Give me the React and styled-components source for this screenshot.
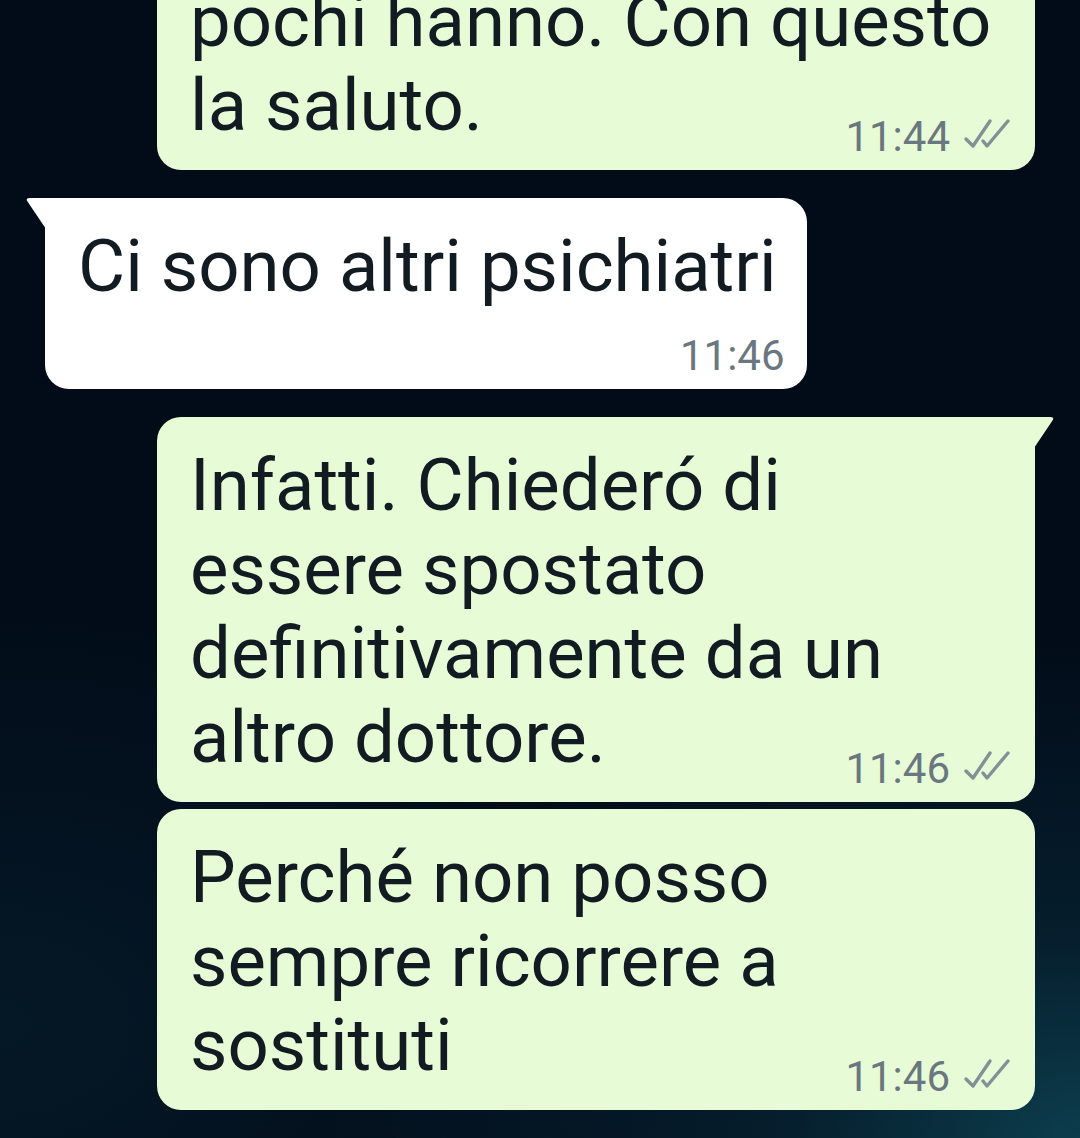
import React from "react";
import styled, { createGlobalStyle, css } from "styled-components";

const Global = createGlobalStyle`
  html, body {
    margin: 0;
    padding: 0;
    height: 1138px;
    overflow: hidden;
    background: #020b18;
  }
  #root { height: 1138px; }
`;

const Screen = styled.div`
  width: 1080px;
  height: 1138px;
  overflow: hidden;
  background:
    radial-gradient(ellipse 70% 45% at 100% 100%, rgba(14, 70, 86, 0.85) 0%, rgba(8, 42, 58, 0.6) 40%, rgba(2, 11, 24, 0) 100%),
    radial-gradient(ellipse 60% 40% at 0% 90%, rgba(6, 30, 44, 0.7) 0%, rgba(2, 11, 24, 0) 100%),
    #020b18;
  font-family: Roboto, "Noto Sans", "Liberation Sans", sans-serif;
`;

const List = styled.div`
  display: flex;
  flex-direction: column;
  padding: 0 45px;
  margin-top: -47px;
`;

const Row = styled.div`
  display: flex;
  justify-content: ${(p) => (p.$out ? "flex-end" : "flex-start")};
  margin-top: ${(p) => (p.$first ? "0" : p.$grouped ? "7px" : "28px")};
`;

const Bubble = styled.div`
  position: relative;
  display: flex;
  flex-direction: column;
  box-sizing: border-box;
  padding: 27px 30px 8px 33px;
  border-radius: 24px;
  background: ${(p) => (p.$out ? "#e7fcd6" : "#ffffff")};
  ${(p) => (p.$out ? css`width: 878px;` : css`max-width: 878px;`)}
  ${(p) =>
    p.$tail &&
    (p.$out
      ? css`border-top-right-radius: 0;`
      : css`border-top-left-radius: 0;`)}
`;

const Tail = styled.svg`
  position: absolute;
  top: 0;
  width: 21px;
  height: 31px;
  ${(p) => (p.$out ? css`right: -20px;` : css`left: -20px;`)}
`;

const Text = styled.div`
  font-size: 72.5px;
  line-height: 84px;
  color: #111b21;
  white-space: pre-line;
`;

const Meta = styled.div`
  display: flex;
  align-items: flex-start;
  justify-content: flex-end;
  gap: 12px;
  height: 50px;
  margin-top: ${(p) => (p.$inline ? "-36px" : "22px")};
  margin-right: ${(p) => (p.$out ? "-5px" : "-8px")};
`;

const Time = styled.span`
  font-size: 42px;
  line-height: 50px;
  color: #6b7780;
`;

const Ticks = styled.svg`
  width: 48px;
  height: 32px;
  flex: none;
  margin-top: 5px;
`;

const DoubleTick = () => (
  <Ticks viewBox="0 0 48 32" fill="none" stroke="#858f96" strokeWidth="3.4" strokeLinecap="round" strokeLinejoin="round">
    <path d="M4 22 L11 29 L28 4" />
    <path d="M21 24 L25 29 L46 4" />
  </Ticks>
);

const TailShape = ({ out }) =>
  out ? (
    <Tail $out viewBox="0 0 21 31">
      <path d="M0 0 H16 Q21 0 18.5 3.5 L0 31 Z" fill="#e7fcd6" />
    </Tail>
  ) : (
    <Tail viewBox="0 0 21 31">
      <path d="M21 0 H5 Q0 0 2.5 3.5 L21 31 Z" fill="#ffffff" />
    </Tail>
  );

const messages = [
  { out: true, text: "pochi hanno. Con questo\nla saluto.", time: "11:44", inline: true, first: true },
  { out: false, text: "Ci sono altri psichiatri", time: "11:46", inline: false, tail: true },
  { out: true, text: "Infatti. Chiederó di\nessere spostato\ndefinitivamente da un\naltro dottore.", time: "11:46", inline: true, tail: true },
  { out: true, text: "Perché non posso\nsempre ricorrere a\nsostituti", time: "11:46", inline: true, grouped: true },
];

export default function App() {
  return (
    <>
      <Global />
      <Screen>
        <List>
          {messages.map((m, i) => (
            <Row key={i} $out={m.out} $first={m.first} $grouped={m.grouped}>
              <Bubble $out={m.out} $tail={m.tail}>
                {m.tail && <TailShape out={m.out} />}
                <Text>{m.text}</Text>
                <Meta $inline={m.inline} $out={m.out}>
                  <Time>{m.time}</Time>
                  {m.out && <DoubleTick />}
                </Meta>
              </Bubble>
            </Row>
          ))}
        </List>
      </Screen>
    </>
  );
}
